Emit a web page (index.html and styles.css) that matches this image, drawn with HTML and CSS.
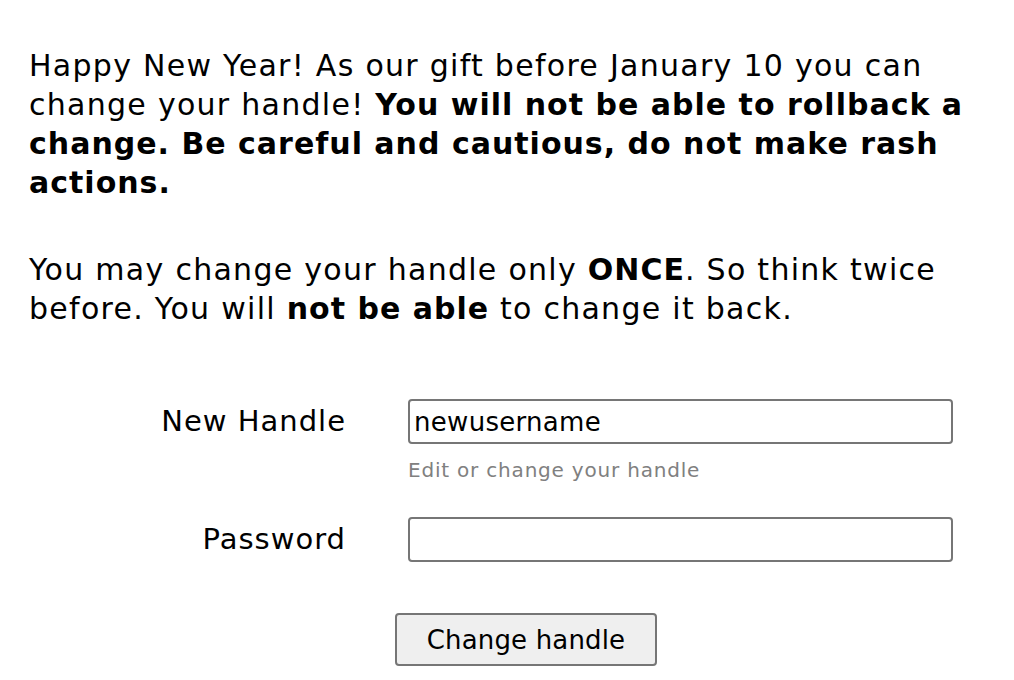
FILE: index.html
```html
<!DOCTYPE html>
<html>
<head>
<meta charset="utf-8">
<link rel="stylesheet" href="styles.css">
</head>
<body>
<div class="page">
  <p class="notice">Happy New Year! As our gift before January 10 you can change your handle! <b>You will not be able to rollback a change. Be careful and cautious, do not make rash actions.</b></p>
  <p class="notice last">You may change your handle only <b>ONCE</b>. So think twice before. You will <b>not be able</b> to change it back.</p>
  <form class="form">
    <label class="label" for="handle">New Handle</label>
    <div class="field">
      <input class="input" id="handle" type="text" value="newusername">
      <div class="hint">Edit or change your handle</div>
    </div>
    <label class="label" for="pass">Password</label>
    <div class="field">
      <input class="input" id="pass" type="password">
    </div>
    <div class="actions">
      <button class="button" type="button">Change handle</button>
    </div>
  </form>
</div>
</body>
</html>
```

FILE: styles.css
```css
html, body {
  margin: 0;
  padding: 0;
  background: #fff;
}
body {
  font-family: "DejaVu Sans", Verdana, sans-serif;
  color: #000;
}
.page {
  padding: 46px 0 0 29px;
  width: 970px;
}
.notice {
  margin: 0 0 48px 0;
  font-size: 30px;
  letter-spacing: 1.28px;
  line-height: 39px;
}
.notice b {
  letter-spacing: 1px;
}
.notice.last {
  margin-bottom: 0;
}
.form {
  display: grid;
  grid-template-columns: 316px 545px;
  column-gap: 63px;
  row-gap: 0;
  margin-top: 71px;
}
.label {
  font-size: 29px;
  letter-spacing: 1px;
  text-align: right;
  line-height: 44px;
  height: 44px;
  margin-right: -1px;
}
.field {
  display: flex;
  flex-direction: column;
}
.input {
  box-sizing: border-box;
  width: 545px;
  height: 45px;
  border: 2px solid #767676;
  border-radius: 4px;
  font-family: "DejaVu Sans", Verdana, sans-serif;
  font-size: 26px;
  letter-spacing: 0.3px;
  padding: 0 4px;
  margin: 0;
  color: #000;
  background: #fff;
}
.hint {
  font-size: 20px;
  letter-spacing: 0.8px;
  color: #808080;
  margin-top: 14px;
  margin-bottom: 35px;
}
.actions {
  grid-column: 2;
  margin-top: 51px;
  margin-left: -13px;
}
.button {
  box-sizing: border-box;
  width: 262px;
  height: 53px;
  border: 2px solid #767676;
  border-radius: 4px;
  background: #efefef;
  font-family: "DejaVu Sans", Verdana, sans-serif;
  font-size: 26px;
  letter-spacing: 0.15px;
  color: #000;
  padding: 0;
}
```
